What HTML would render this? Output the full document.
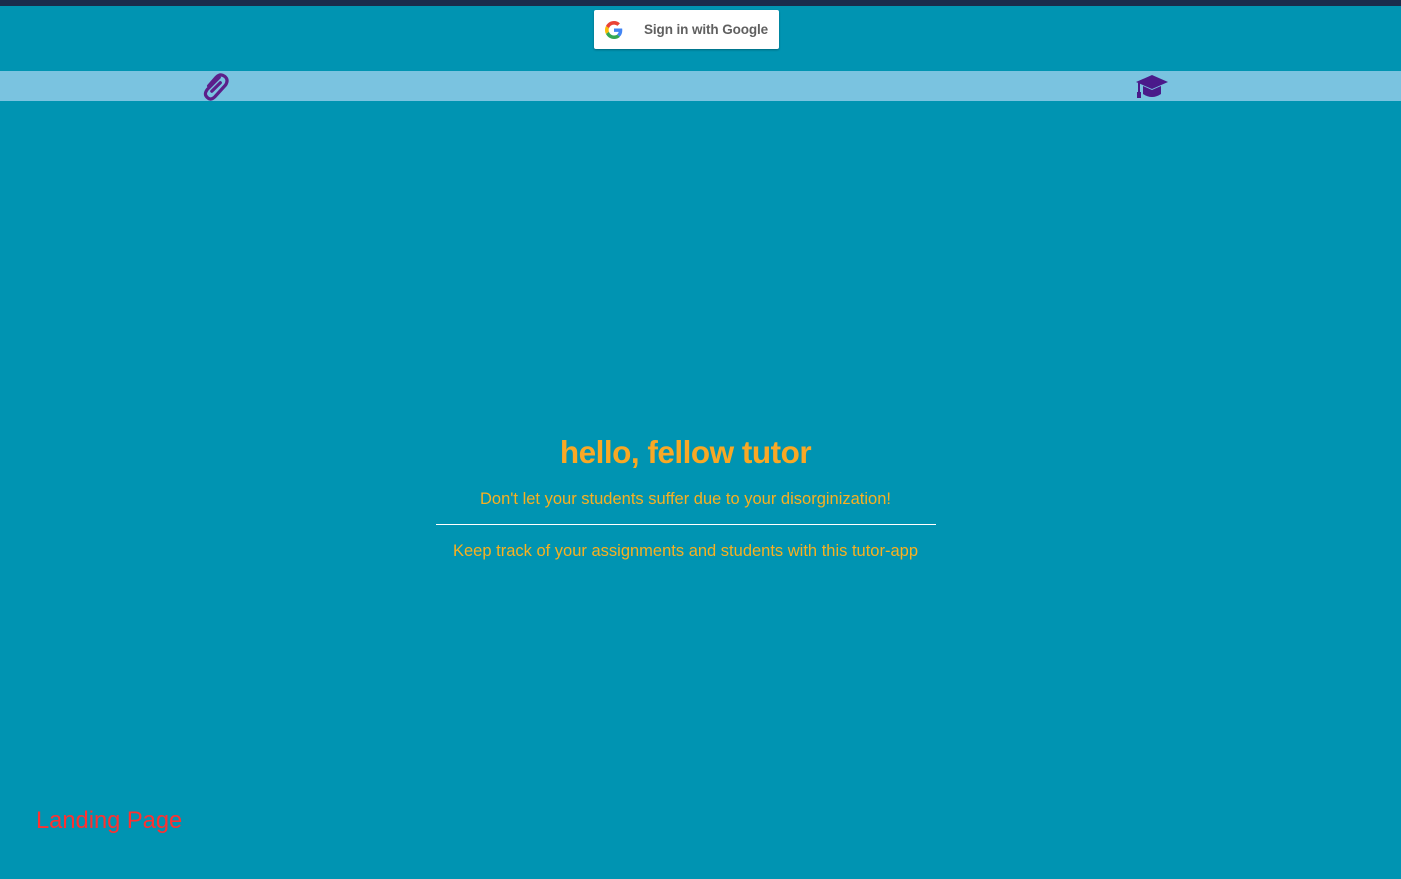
<!DOCTYPE html>
<html><head><meta charset="utf-8"><style>
html,body{margin:0;padding:0}
body{width:1401px;height:879px;background:#0094b2;position:relative;overflow:hidden;font-family:"Liberation Sans",sans-serif}
.top{position:absolute;left:0;top:0;width:1401px;height:6px;background:#1a2c4c}
.btn{position:absolute;left:594px;top:10px;width:185px;height:39px;background:#fff;border-radius:2px;box-shadow:0 1px 2px rgba(0,0,0,.3)}
.btn span{position:absolute;left:50px;top:12px;font-size:13.5px;color:#606060;font-weight:bold;letter-spacing:-0.1px}
.bar{position:absolute;left:0;top:71px;width:1401px;height:30px;background:#7ac3e0}
h1{position:absolute;left:0;width:1371px;top:434px;margin:0;text-align:center;font-size:31.5px;color:#f9a825;font-weight:bold;letter-spacing:-0.5px}
.t{position:absolute;left:0;width:1371px;text-align:center;font-size:16.5px;color:#f9b020}
.hr{position:absolute;left:436px;top:524px;width:500px;height:1px;background:#fff}
.lp{position:absolute;left:36px;top:808px;font-size:23.7px;color:#ff3030}
</style></head><body>
<div class="top"></div>
<div class="btn">
<svg style="position:absolute;left:11px;top:11px" width="18" height="18" viewBox="0 0 48 48"><path fill="#EA4335" d="M24 9.5c3.5 0 6.6 1.2 9.1 3.6l6.8-6.8C35.8 2.4 30.3 0 24 0 14.6 0 6.6 5.4 2.6 13.3l7.9 6.1C12.4 13.7 17.7 9.5 24 9.5z"/><path fill="#4285F4" d="M46.1 24.5c0-1.600-.1-3.1-.4-4.5H24v9h12.4c-.5 2.9-2.2 5.3-4.6 7l7.5 5.8c4.4-4 6.8-10 6.8-17.3z"/><path fill="#FBBC05" d="M10.5 28.6c-.5-1.4-.8-3-.8-4.6s.3-3.2.8-4.6l-7.9-6.1C.9 16.6 0 20.2 0 24s.9 7.4 2.6 10.7l7.9-6.1z"/><path fill="#34A853" d="M24 48c6.5 0 11.9-2.1 15.9-5.8l-7.5-5.8c-2.1 1.4-4.800 2.3-8.4 2.3-6.3 0-11.6-4.2-13.5-10l-7.9 6.1C6.6 42.6 14.6 48 24 48z"/></svg>
<span>Sign in with Google</span></div>
<div class="bar"></div>
<svg style="position:absolute;left:200px;top:71px" width="30" height="32" viewBox="0 0 28 30"><path d="M18 6 L7 17 Q3 22 7 25 Q10 28 14 24 L24 13 Q27 8 23 5 Q19 2 15 6 L8 14" fill="none" stroke="#5b1f8a" stroke-width="3" stroke-linecap="round"/><path d="M19 11 L11 19" fill="none" stroke="#5b1f8a" stroke-width="3" stroke-linecap="round"/></svg>
<svg style="position:absolute;left:1135px;top:74px" width="34" height="26" viewBox="0 0 34 26"><path d="M17 1 L33 8 L17 15 L1 8Z" fill="#4a1a8a"/><path d="M8 12 L8 20 Q17 26 26 20 L26 12 L17 16Z" fill="#4a1a8a"/><path d="M4 9 L4 19" stroke="#4a1a8a" stroke-width="2"/><rect x="2" y="18" width="4" height="6" fill="#4a1a8a"/></svg>
<h1>hello, fellow tutor</h1>
<div class="t" style="top:490px">Don't let your students suffer due to your disorginization!</div>
<div class="hr"></div>
<div class="t" style="top:542px">Keep track of your assignments and students with this tutor-app</div>
<div class="lp">Landing Page</div>
</body></html>
